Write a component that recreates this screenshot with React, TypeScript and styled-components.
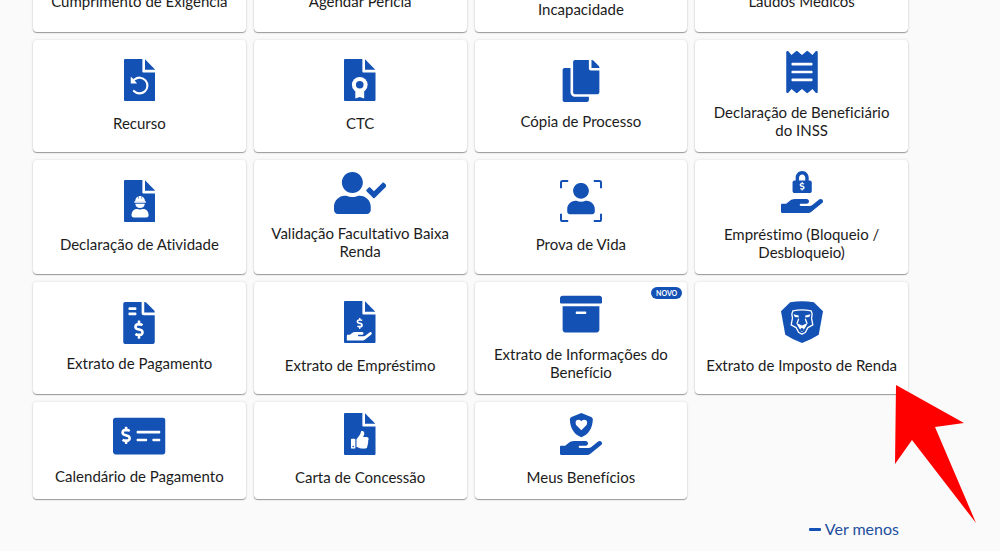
import React from 'react';
import styled, { createGlobalStyle } from 'styled-components';
import {
  FaArchive,
  FaCopy,
  FaDollarSign,
  FaFileInvoiceDollar,
  FaHandHolding,
  FaHeart,
  FaLock,
  FaMoneyCheckAlt,
  FaReceipt,
  FaThumbsUp,
  FaUser,
  FaUserCheck,
} from 'react-icons/fa';

const BLUE = '#1351b4';

const GlobalStyle = createGlobalStyle`
  * { box-sizing: border-box; }
  body {
    margin: 0;
    background: #fafafa;
    color: #1c1c1c;
    font-family: Lato, "Open Sans", sans-serif;
    font-variant-ligatures: none;
  }
`;

const Page = styled.main`
  position: relative;
  overflow: hidden;
  padding: 0 92px 12px 33px;
`;

const Grid = styled.div`
  display: grid;
  grid-template-columns: repeat(4, minmax(0, 1fr));
  gap: 8px;
  margin-top: -8px;
`;

const Card = styled.button<{ $gap?: number }>`
  position: relative;
  display: flex;
  flex-direction: column;
  align-items: center;
  justify-content: center;
  gap: ${({ $gap }) => $gap ?? 13}px;
  padding: 11px 10px 13px;
  border: 0;
  border-radius: 4px;
  background: #fff;
  box-shadow: 0 1px 1px rgba(0, 0, 0, 0.36), 0 0 3px rgba(0, 0, 0, 0.12);
  color: inherit;
  font: inherit;
  font-size: 15px;
  line-height: 18px;
  cursor: pointer;
`;

const TopCard = styled(Card)<{ $low?: boolean }>`
  justify-content: flex-start;
  height: 40px;
  padding: ${({ $low }) => ($low ? 8 : 0)}px 10px 0;
`;

const IconBox = styled.span`
  display: flex;
  height: 42px;
  color: ${BLUE};

  > svg {
    display: block;
    height: 42px;
    width: auto;
  }
`;

const Badge = styled.span`
  position: absolute;
  top: 5px;
  right: 5px;
  padding: 0 5px;
  border-radius: 6px;
  background: ${BLUE};
  color: #fff;
  font-size: 7px;
  font-weight: 700;
  line-height: 12px;
`;

const Footer = styled.footer`
  display: flex;
  justify-content: flex-end;
  padding: 20px 9px 0;
`;

const LessButton = styled.button`
  display: flex;
  align-items: center;
  gap: 4px;
  padding: 0;
  border: 0;
  background: none;
  color: #1f4f9f;
  font: inherit;
  font-size: 16px;
  line-height: 20px;
  cursor: pointer;
`;

const Dash = styled.span`
  width: 12px;
  height: 3px;
  border-radius: 1px;
  background: ${BLUE};
`;

const Pointer = styled.svg`
  position: absolute;
  top: 385px;
  right: 24px;
  width: 82px;
  height: 138px;
  pointer-events: none;
`;

/* Sheet with a folded corner; children are drawn over it. */
const Sheet = ({ children }: { children: React.ReactNode }) => (
  <svg viewBox="0 0 384 512" fill="currentColor" aria-hidden="true">
    <path d="M224 0H16C6 0 0 6 0 16v480c0 10 6 16 16 16h352c10 0 16-6 16-16V164H236c-8 0-12-4-12-12z" />
    <path d="M256 4l126 128H256z" />
    {children}
  </svg>
);

const Square = ({ children }: { children: React.ReactNode }) => (
  <svg viewBox="0 0 128 128" fill="currentColor" aria-hidden="true">
    {children}
  </svg>
);

/* Frame for the 5:4 icons, which are drawn centred in a square. */
const Wide = ({ children }: { children: React.ReactNode }) => (
  <svg viewBox="0 0 640 512" fill="currentColor" aria-hidden="true">
    {children}
  </svg>
);

const AppealIcon = () => (
  <Sheet>
    <path d="M128 250A96 96 0 1 1 120 390" fill="none" stroke="#fff" strokeWidth="26" strokeLinecap="round" />
    <path d="M82 216l30 26 48 58H82z" fill="#fff" />
  </Sheet>
);

const AwardIcon = () => (
  <Sheet>
    <path d="M138 372h108v110l-54-20-54 20z" fill="#fff" />
    <circle cx="192" cy="314" r="96" fill="#fff" />
    <circle cx="192" cy="314" r="46" />
  </Sheet>
);

const WorkerIcon = () => (
  <Sheet>
    <g fill="#fff">
      <path d="M136 262c0-36 22-68 60-68s60 32 60 68z" />
      <rect x="124" y="258" width="144" height="18" rx="8" />
      <path d="M138 288h116c-2 32-26 54-58 54s-56-22-58-54z" />
      <path d="M92 430c0-46 26-78 66-78 12 0 22 8 38 8s26-8 38-8c40 0 66 32 66 78 0 16-10 26-26 26H118c-16 0-26-10-26-26z" />
    </g>
    <path d="M176 190v38M216 190v38" stroke="currentColor" strokeWidth="7" />
  </Sheet>
);

const UserCheckIcon = () => (
  <Wide>
    <FaUserCheck y={-64} size={640} />
  </Wide>
);

const CheckIcon = () => (
  <Wide>
    <FaMoneyCheckAlt y={-64} size={640} />
  </Wide>
);

const LoanStatementIcon = () => (
  <Sheet>
    <FaDollarSign x={124} y={204} size={136} color="#fff" />
    <FaHandHolding x={32} y={190} size={308} color="#fff" />
  </Sheet>
);

const GrantIcon = () => (
  <Sheet>
    <FaThumbsUp x={84} y={218} size={218} color="#fff" />
  </Sheet>
);

const FaceIcon = () => (
  <Square>
    <path
      d="M3 25V8q0-5 5-5h17M103 3h17q5 0 5 5v17M125 103v17q0 5-5 5h-17M25 125H8q-5 0-5-5v-17"
      fill="none"
      stroke="currentColor"
      strokeWidth="6"
    />
    <FaUser x={16} y={9} size={96} />
  </Square>
);

const LockHandIcon = () => (
  <Square>
    <FaLock x={31} y={0} size={67} />
    <FaDollarSign x={51} y={33} size={27} color="#fff" />
    <FaHandHolding x={0} y={7} size={128} />
  </Square>
);

const ShieldHandIcon = () => (
  <Square>
    <path d="M65 0l30 12q5 2 5 8c-1 28-14 46-35 54-21-8-34-26-35-54q0-6 5-8z" />
    <FaHeart x={47} y={18} size={36} color="#fff" />
    <FaHandHolding x={0} y={7} size={128} />
  </Square>
);

const LionIcon = () => (
  <Square>
    <path d="M28 4Q64-3 100 4L128 31 115 103Q92 118 64 128 36 118 13 103L0 31z" />
    <g fill="none" stroke="#fff" strokeWidth="4" strokeLinejoin="round">
      <path d="M36 30q28-6 56 0l3 10-2 12 4 21-15 8-8 15-10 5-10-5-8-15-15-8 4-21-2-12z" />
      <path d="M54 54l-5 14M74 54l5 14" />
    </g>
    <path d="M38 40l16 4v6l-12-1zM90 40l-16 4v6l12-1zM46 66l18 9 18-9-8 15-10 14-10-14z" fill="#fff" />
    <circle cx="64" cy="87" r="5" />
  </Square>
);

type Service = {
  label: string;
  icon: React.ReactNode;
  gap?: number;
  badge?: string;
};

const topServices = [
  { label: 'Cumprimento de Exigência' },
  { label: 'Agendar Perícia' },
  { label: 'Incapacidade', low: true },
  { label: 'Laudos Médicos' },
];

const services: Service[] = [
  { label: 'Recurso', icon: <AppealIcon /> },
  { label: 'CTC', icon: <AwardIcon /> },
  { label: 'Cópia de Processo', icon: <FaCopy />, gap: 10 },
  { label: 'Declaração de Beneficiário do INSS', icon: <FaReceipt />, gap: 10 },
  { label: 'Declaração de Atividade', icon: <WorkerIcon /> },
  { label: 'Validação Facultativo Baixa Renda', icon: <UserCheckIcon />, gap: 10 },
  { label: 'Prova de Vida', icon: <FaceIcon /> },
  { label: 'Empréstimo (Bloqueio / Desbloqueio)', icon: <LockHandIcon />, gap: 12 },
  { label: 'Extrato de Pagamento', icon: <FaFileInvoiceDollar />, gap: 10 },
  { label: 'Extrato de Empréstimo', icon: <LoanStatementIcon /> },
  { label: 'Extrato de Informações do Benefício', icon: <FaArchive />, gap: 10, badge: 'NOVO' },
  { label: 'Extrato de Imposto de Renda', icon: <LionIcon /> },
  { label: 'Calendário de Pagamento', icon: <CheckIcon />, gap: 10 },
  { label: 'Carta de Concessão', icon: <GrantIcon /> },
  { label: 'Meus Benefícios', icon: <ShieldHandIcon /> },
];

export default function App() {
  return (
    <>
      <GlobalStyle />
      <Page>
        <Grid>
          {topServices.map(({ label, low }) => (
            <TopCard key={label} type="button" $low={low}>
              {label}
            </TopCard>
          ))}
          {services.map(({ label, icon, gap, badge }) => (
            <Card key={label} type="button" $gap={gap}>
              <IconBox>{icon}</IconBox>
              <span>{label}</span>
              {badge && <Badge>{badge}</Badge>}
            </Card>
          ))}
        </Grid>
        <Footer>
          <LessButton type="button">
            <Dash />
            Ver menos
          </LessButton>
        </Footer>
        <Pointer viewBox="0 0 82 138" aria-hidden="true">
          <path d="M2 0l68 38-29 4 41 96-64-83L1 79z" fill="#f00" />
        </Pointer>
      </Page>
    </>
  );
}
